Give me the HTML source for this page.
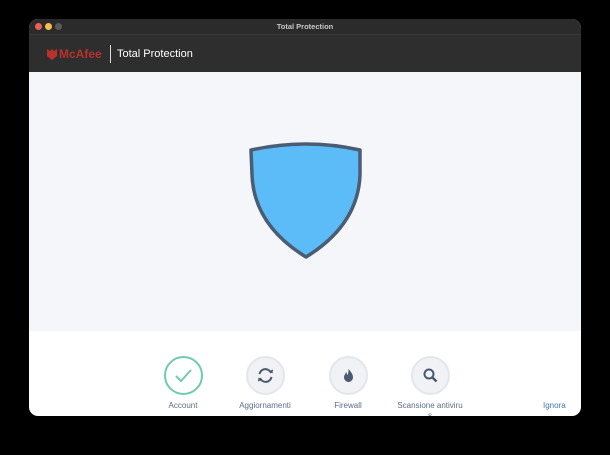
<!DOCTYPE html>
<html><head><meta charset="utf-8"><style>
*{margin:0;padding:0;box-sizing:border-box}
body{width:610px;height:455px;background:#000;font-family:"Liberation Sans",sans-serif;position:relative;overflow:hidden}
.win{position:absolute;left:29px;top:19px;width:552px;height:397px;border-radius:9px;overflow:hidden;background:#fff}
.tb{position:absolute;left:0;top:0;width:100%;height:15px;background:#2b2b2b;color:#c8c8c8;font-size:7.5px;font-weight:bold;text-align:center;line-height:15px}
.dot{position:absolute;top:4px;width:7px;height:7px;border-radius:50%}
.hd{position:absolute;left:0;top:15px;width:100%;height:38px;background:#2e2e2e;border-top:1px solid #3a3a3a}
.body{position:absolute;left:0;top:53px;width:100%;height:259px;background:#f4f6f9}
.c{position:absolute;top:337px;width:39px;height:39px;border-radius:50%;background:#f0f2f6;border:2px solid #e3e6eb}
.lb{position:absolute;top:382px;font-size:8px;color:#5a6f86;width:100px;text-align:center}
</style></head><body>
<div class="win">
<div class="tb">Total Protection
<div class="dot" style="left:6px;background:#ec5f57"></div>
<div class="dot" style="left:16px;background:#f4be4f"></div>
<div class="dot" style="left:26px;background:#5a5a5a"></div>
</div>
<div class="hd">
<svg style="position:absolute;left:18px;top:14px" width="10" height="11" viewBox="0 0 10 11"><path d="M0 0 L3 2 L5 0 L7 2 L10 0 L10 7 L5 11 L0 7Z" fill="#b8322b"/></svg>
<span style="position:absolute;left:30px;top:12px;color:#b8322b;font-size:12px;font-weight:bold">McAfee</span>
<div style="position:absolute;left:81px;top:10px;width:1px;height:18px;background:#ddd"></div>
<span style="position:absolute;left:88px;top:13px;color:#fff;font-size:11px">Total Protection</span>
</div>
<div class="body"></div>
<svg style="position:absolute;left:0;top:0" width="552" height="397">
<path d="M222,131 Q277,119 331,131 L331,156 Q329,206 277,238 Q225,206 223,156 Z" fill="#5bbcf7" stroke="#4b5d75" stroke-width="3.5" stroke-linejoin="round"/>
</svg>
<div class="c" style="left:135px;background:#fff;border-color:#6fcbae"><svg width="35" height="35" viewBox="0 0 35 35"><path d="M10 18 L15 23 L25 12" fill="none" stroke="#6fcbae" stroke-width="2"/></svg></div>
<div class="c" style="left:217px"><svg width="35" height="35" viewBox="0 0 35 35"><path d="M11.5 16 A6 6 0 0 1 23 15 M23.5 19 A6 6 0 0 1 12 20" fill="none" stroke="#4a5a70" stroke-width="2"/><path d="M21 13 L24.5 15.5 L25 11.5Z M14 22 L10.5 19.5 L10 23.5Z" fill="#4a5a70"/></svg></div>
<div class="c" style="left:300px"><svg width="35" height="35" viewBox="0 0 35 35"><path d="M17.5 11 C20 14 22 16 22 19.5 A4.5 4.5 0 0 1 13 19.5 C13 17 14.5 16 15 14 C16 15.5 16 17 16.5 17 C17.5 15 17.5 13 17.5 11Z" fill="#4a5a70"/></svg></div>
<div class="c" style="left:382px"><svg width="35" height="35" viewBox="0 0 35 35"><circle cx="16" cy="16" r="4.5" fill="none" stroke="#4a5a70" stroke-width="2"/><path d="M19.5 19.5 L23.5 23.5" stroke="#4a5a70" stroke-width="2.5"/></svg></div>
<div class="lb" style="left:104px">Account</div>
<div class="lb" style="left:186px">Aggiornamenti</div>
<div class="lb" style="left:269px">Firewall</div>
<div class="lb" style="left:351px">Scansione antiviru</div>
<div class="lb" style="left:351px;top:392px">s</div>
<div style="position:absolute;left:514px;top:382px;font-size:8px;color:#3b78b5">Ignora</div>
</div>
</body></html>
